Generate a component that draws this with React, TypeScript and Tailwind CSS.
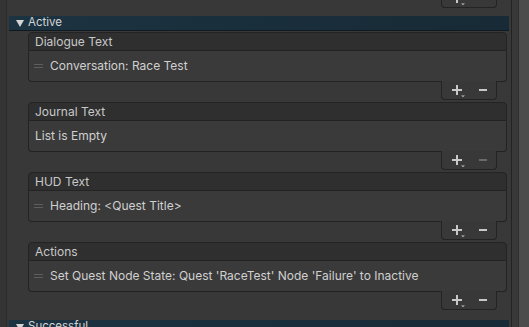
import React from "react";

type Item = { text: string; handle?: boolean };

const lists: { title: string; item?: Item; minusDisabled?: boolean }[] = [
  { title: "Dialogue Text", item: { text: "Conversation: Race Test", handle: true } },
  { title: "Journal Text", item: undefined, minusDisabled: true },
  { title: "HUD Text", item: { text: "Heading: <Quest Title>", handle: true } },
  {
    title: "Actions",
    item: { text: "Set Quest Node State: Quest 'RaceTest' Node 'Failure' to Inactive", handle: true },
  },
];

function PlusMinus({ minusDisabled }: { minusDisabled?: boolean }) {
  return (
    <div className="flex h-[19px] w-[56px] shrink-0 items-center rounded-b-[4px] border border-t-0 border-[#232323] bg-[#383838] pl-[10px]">
      <svg width="14" height="12" viewBox="0 0 14 12" className="mt-[1px]">
        <rect x="0" y="4" width="10" height="2" fill="#c8c8c8" />
        <rect x="4" y="0" width="2" height="10" fill="#c8c8c8" />
        <path d="M9 10.5 L13 10.5 L11 12 Z" fill="#c8c8c8" />
      </svg>
      <svg width="10" height="10" viewBox="0 0 10 10" className="ml-[12px]">
        <rect x="1" y="4" width="8" height="2" fill={minusDisabled ? "#6a6a6a" : "#c8c8c8"} />
      </svg>
    </div>
  );
}

function Handle() {
  return (
    <div className="mr-[7px] flex w-[9px] flex-col gap-[2px]">
      <div className="h-px bg-[#5e5e5e]" />
      <div className="h-px bg-[#5e5e5e]" />
    </div>
  );
}

function ReorderList({
  title,
  item,
  minusDisabled,
}: {
  title: string;
  item?: Item;
  minusDisabled?: boolean;
}) {
  return (
    <div className="mb-[2px] ml-[21px] mr-[4px]">
      <div className="flex h-[19px] items-center rounded-t-[4px] border border-[#232323] bg-[#2f2f2f] pl-[6px] text-[12px] text-[#c8c8c8]">
        {title}
      </div>
      <div className="flex h-[31px] items-center rounded-b-[4px] border border-t-0 border-[#232323] bg-[#3a3a3a] pl-[5px] text-[12px] text-[#d0d0d0]">
        {item ? (
          <>
            {item.handle && <Handle />}
            <span>{item.text}</span>
          </>
        ) : (
          <span className="pl-[1px]">List is Empty</span>
        )}
      </div>
      <div className="-mt-px flex justify-end pr-[10px]">
        <PlusMinus minusDisabled={minusDisabled} />
      </div>
    </div>
  );
}

function Foldout({ label }: { label: string }) {
  return (
    <div className="mx-[2px] flex h-[15px] items-center border-b border-[#0f1a20] bg-gradient-to-r from-[#1c3341] to-[#172a36] pl-[7px] text-[11.5px] text-[#d4d4d4]">
      <svg width="8" height="7" viewBox="0 0 8 7" className="mr-[4px]">
        <path d="M0 0 L8 0 L4 7 Z" fill="#d4d4d4" />
      </svg>
      {label}
    </div>
  );
}

export default function App() {
  return (
    <div
      className="flex h-[327px] w-[529px] overflow-hidden bg-[#383838]"
      style={{ fontFamily: "Inter, 'Noto Sans', sans-serif" }}
    >
      <div className="w-[7px] shrink-0 border-r border-[#2b2b2b] bg-[#343434]" />
      <div className="w-[504px] shrink-0">
        <div className="flex h-[8px] items-end justify-end overflow-hidden pr-[14px]">
          <PlusMinus />
        </div>
        <div className="h-[8px]" />
        <Foldout label="Active" />
        <div className="h-[1px]" />
        {lists.map((l) => (
          <ReorderList key={l.title} title={l.title} item={l.item} minusDisabled={l.minusDisabled} />
        ))}
        <div className="h-[8px]" />
        <Foldout label="Successful" />
      </div>
      <div className="w-px shrink-0 bg-[#232323]" />
      <div className="w-[6px] shrink-0 bg-[#383838]" />
      <div className="w-px shrink-0 bg-[#2e2e2e]" />
      <div className="flex-1 bg-[#4c4c4c]" />
    </div>
  );
}
